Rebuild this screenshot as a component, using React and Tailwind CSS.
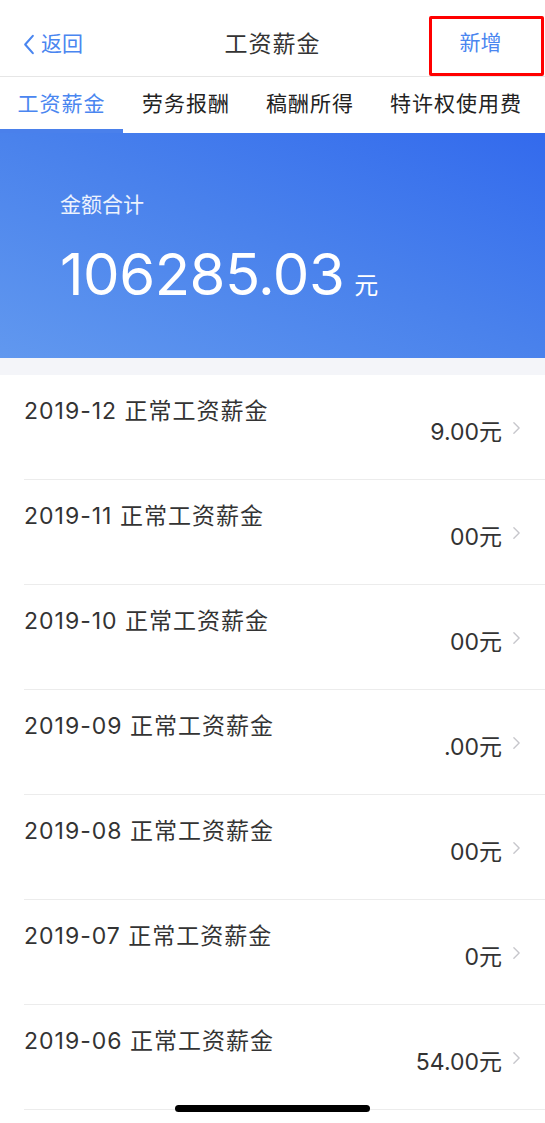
import React from "react";

const rows = [
  { month: "2019-12", amount: "9.00元" },
  { month: "2019-11", amount: "00元" },
  { month: "2019-10", amount: "00元" },
  { month: "2019-09", amount: ".00元" },
  { month: "2019-08", amount: "00元" },
  { month: "2019-07", amount: "0元" },
  { month: "2019-06", amount: "54.00元" },
];

function Chevron({ className }) {
  return (
    <svg viewBox="0 0 10 16" className={className} fill="none" stroke="currentColor" strokeWidth="1.6" strokeLinecap="round" strokeLinejoin="round">
      <path d="M2 2l6 6-6 6" />
    </svg>
  );
}

function Row({ month, amount }) {
  return (
    <div className="h-[105px] pl-6 flex flex-col">
      <div className="flex-1 flex flex-col border-b border-[#ececec] pr-6">
        <div className="pt-[23px] text-[23px] leading-[26px] tracking-[1px] text-[#333]">
          {month} 正常工资薪金
        </div>
        <div className="flex items-center justify-end -mt-[5px]">
          <span className="text-[23px] leading-[26px] text-[#333]">{amount}</span>
          <Chevron className="w-[9px] h-[14px] ml-[10px] -mt-[8px] text-[#c7c7cc]" />
        </div>
      </div>
    </div>
  );
}

export default function App() {
  return (
    <div
      className="w-[545px] h-[1123px] bg-white relative overflow-hidden"
      style={{ fontFamily: 'Inter, "Noto Sans CJK SC", sans-serif' }}
    >
      {/* header */}
      <div className="h-[77px] flex items-center relative border-b border-[#e6e6e6]">
        <div className="flex items-center pl-[23px] pt-[12px] text-[#4a86f0] text-[21px]">
          <svg viewBox="0 0 12 22" className="w-[12px] h-[21px] mr-[6px]" fill="none" stroke="currentColor" strokeWidth="2.2" strokeLinecap="round" strokeLinejoin="round">
            <path d="M10 2L2 11l8 9" />
          </svg>
          <span>返回</span>
        </div>
        <div className="absolute left-0 right-0 top-[28px] text-center text-[23px] leading-[32px] tracking-[1px] text-[#333] pointer-events-none">
          工资薪金
        </div>
        <div className="ml-auto mr-[1px] mt-[16px] w-[115px] h-[60px] border-[3px] border-[#ff0000] rounded-[2px] flex items-center justify-center pb-[6px] pr-[12px] text-[#4a86f0] text-[21px]">
          新增
        </div>
      </div>

      {/* tabs */}
      <div className="h-[56px] flex items-stretch text-[21px] tracking-[1px]">
        <div className="w-[123px] flex items-center justify-center text-[#4a86f0] border-b-[4px] border-[#4a80eb] pt-[1px]">
          工资薪金
        </div>
        <div className="flex-1 flex items-center gap-[36px] pl-[19px] text-[#222] pb-[3px] whitespace-nowrap">
          <span>劳务报酬</span>
          <span>稿酬所得</span>
          <span>特许权使用费</span>
        </div>
      </div>

      {/* total */}
      <div className="h-[225px] bg-gradient-to-tr from-[#6198ef] via-[#4a82ec] to-[#336aed] pl-[60px] pt-[58px] text-white">
        <div className="text-[21px] leading-[28px] text-white/90">金额合计</div>
        <div className="mt-[24px] flex items-end">
          <span className="text-[58px] leading-[62px] tracking-[-0.5px]">106285.03</span>
          <span className="text-[24px] leading-[30px] ml-[10px] mb-[4px]">元</span>
        </div>
      </div>

      <div className="h-[17px] bg-[#f4f5f9]" />

      {/* list */}
      <div>
        {rows.map((r) => (
          <Row key={r.month} month={r.month} amount={r.amount} />
        ))}
      </div>

      {/* home indicator */}
      <div className="absolute left-[175px] top-[1105px] w-[195px] h-[7px] rounded-full bg-black" />
    </div>
  );
}
